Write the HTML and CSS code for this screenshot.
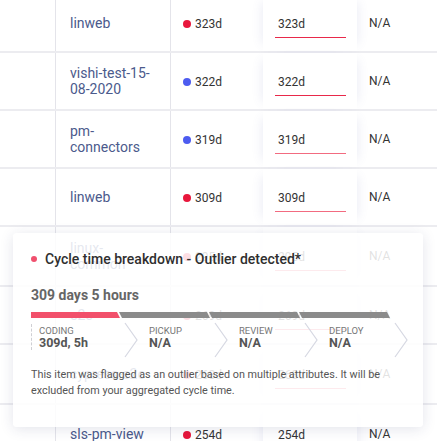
FILE: index.html
```html
<!DOCTYPE html>
<html lang="en">
	<head>
		<meta charset="UTF-8" />
		<meta name="viewport" content="width=device-width, initial-scale=1.0" />
		<title>Cycle time</title>
		<link rel="stylesheet" href="styles.css">
	</head>
	<body>
		<div class="table">
			<div class="row row-first">
				<div class="cell cell-blank"></div>
				<div class="cell cell-repo"><a href="#">linweb</a></div>
				<div class="cell cell-time"><span class="dot dot-red"></span>323d</div>
				<div class="cell cell-target"><span class="target target-strong">323d</span></div>
				<div class="cell cell-na">N/A</div>
			</div>
			<div class="row">
				<div class="cell cell-blank"></div>
				<div class="cell cell-repo"><a href="#">vishi-test-15-08-2020</a></div>
				<div class="cell cell-time"><span class="dot dot-blue"></span>322d</div>
				<div class="cell cell-target"><span class="target target-strong">322d</span></div>
				<div class="cell cell-na">N/A</div>
			</div>
			<div class="row">
				<div class="cell cell-blank"></div>
				<div class="cell cell-repo"><a href="#">pm-connectors</a></div>
				<div class="cell cell-time"><span class="dot dot-blue"></span>319d</div>
				<div class="cell cell-target"><span class="target">319d</span></div>
				<div class="cell cell-na">N/A</div>
			</div>
			<div class="row">
				<div class="cell cell-blank"></div>
				<div class="cell cell-repo"><a href="#">linweb</a></div>
				<div class="cell cell-time"><span class="dot dot-red"></span>309d</div>
				<div class="cell cell-target"><span class="target">309d</span></div>
				<div class="cell cell-na">N/A</div>
			</div>
			<div class="row row-tall">
				<div class="cell cell-blank"></div>
				<div class="cell cell-repo"><a href="#">linux-common</a></div>
				<div class="cell cell-time"><span class="dot dot-red"></span>295d</div>
				<div class="cell cell-target"><span class="target">295d</span></div>
				<div class="cell cell-na">N/A</div>
			</div>
			<div class="row">
				<div class="cell cell-blank"></div>
				<div class="cell cell-repo"><a href="#">e2e</a></div>
				<div class="cell cell-time"><span class="dot dot-red"></span>269d</div>
				<div class="cell cell-target"><span class="target">269d</span></div>
				<div class="cell cell-na">N/A</div>
			</div>
			<div class="row row-tall">
				<div class="cell cell-blank"></div>
				<div class="cell cell-repo"><a href="#">cypress-e2e</a></div>
				<div class="cell cell-time"><span class="dot dot-red"></span>268d</div>
				<div class="cell cell-target"><span class="target">268d</span></div>
				<div class="cell cell-na">N/A</div>
			</div>
			<div class="row row-tall">
				<div class="cell cell-blank"></div>
				<div class="cell cell-repo"><a href="#">sls-pm-view</a></div>
				<div class="cell cell-time"><span class="dot dot-red"></span>254d</div>
				<div class="cell cell-target"><span class="target">254d</span></div>
				<div class="cell cell-na">N/A</div>
			</div>
		</div>

		<!-- outlier popover, sits over the table -->
		<section class="popover">
			<h3 class="popover-title"><span class="title-dot"></span>Cycle time breakdown - Outlier detected*</h3>
			<div class="popover-total">309 days 5 hours</div>
			<svg class="breakdown-bar" width="360" height="6" viewBox="0 0 360 6">
				<polygon points="0,0 86,0 89,6 0,6" fill="#f2506b" />
				<polygon points="88,0 176,0 179,6 91,6" fill="#8b8b8b" />
				<polygon points="178,0 266,0 269,6 181,6" fill="#8b8b8b" />
				<polygon points="268,0 356,0 359,6 271,6" fill="#8b8b8b" />
			</svg>
			<div class="steps">
				<div class="step step-first">
					<div class="step-body">
						<div class="step-label">Coding</div>
						<div class="step-value">309d, 5h</div>
					</div>
					<svg class="chevron" width="14" height="36" viewBox="0 0 14 36"><polyline points="1,1 13,18 1,35" /></svg>
				</div>
				<div class="step">
					<div class="step-body">
						<div class="step-label">Pickup</div>
						<div class="step-value">N/A</div>
					</div>
					<svg class="chevron" width="14" height="36" viewBox="0 0 14 36"><polyline points="1,1 13,18 1,35" /></svg>
				</div>
				<div class="step">
					<div class="step-body">
						<div class="step-label">Review</div>
						<div class="step-value">N/A</div>
					</div>
					<svg class="chevron" width="14" height="36" viewBox="0 0 14 36"><polyline points="1,1 13,18 1,35" /></svg>
				</div>
				<div class="step">
					<div class="step-body">
						<div class="step-label">Deploy</div>
						<div class="step-value">N/A</div>
					</div>
					<svg class="chevron" width="14" height="36" viewBox="0 0 14 36"><polyline points="1,1 13,18 1,35" /></svg>
				</div>
			</div>
			<p class="popover-text">
				This item was flagged as an outlier based on multiple attributes. It will be
				excluded from your aggregated cycle time.
			</p>
		</section>
	</body>
</html>
```

FILE: styles.css
```css
* {
	box-sizing: border-box;
}
body {
	font-family: Roboto, "Liberation Sans", sans-serif;
	margin: 0;
	background: #fff;
	color: #333;
	overflow: hidden;
}
.table {
	width: 437px;
}
.row {
	display: grid;
	grid-template-columns: 56px 115px 92px 94px 1fr;
	height: 58px;
	border-bottom: 2px solid #ececf0;
}
.row-first {
	margin-top: -5px;
}
.row-tall {
	height: 60px;
}
.cell {
	display: flex;
	align-items: center;
	font-size: 12px;
	line-height: 16px;
}
.cell-blank {
	border-right: 1px solid #e4e4ea;
}
.cell-repo {
	border-right: 1px solid #e4e4ea;
	padding: 0 14px 0 14px;
	font-size: 14px;
}
.cell-repo a {
	color: #4b5a8c;
	text-decoration: none;
	width: 86px;
}
.cell-time {
	padding-left: 12px;
	padding-top: 1px;
}
.dot {
	width: 8px;
	height: 8px;
	border-radius: 50%;
	margin-right: 4px;
}
.dot-red {
	background: #e8173c;
}
.dot-blue {
	background: #4d5cf0;
}
.cell-target {
	position: relative;
	z-index: 1;
	background: #fff;
	padding: 0 11px 0 12px;
	box-shadow: -8px 0 10px -7px rgba(90, 100, 170, 0.12),
		8px 0 10px -7px rgba(90, 100, 170, 0.12);
}
.target {
	display: block;
	width: 71px;
	padding: 8px 3px 5px;
	border-bottom: 1px solid #f26b80;
}
.target-strong {
	border-bottom-color: #e8294a;
}
.cell-na {
	padding-left: 12px;
}

/* popover */
.popover {
	position: absolute;
	top: 233px;
	left: 13px;
	width: 410px;
	height: 194px;
	z-index: 5;
	padding: 16px 18px 0;
	background: rgba(255, 255, 255, 0.86);
	border-radius: 4px;
	box-shadow: 0 2px 14px rgba(40, 50, 100, 0.13);
}
.popover-title {
	display: flex;
	align-items: center;
	margin: 0;
	font-size: 14px;
	line-height: 20px;
	font-weight: 500;
	color: #2f2f2f;
}
.title-dot {
	width: 6px;
	height: 6px;
	border-radius: 50%;
	background: #f0506e;
	margin-right: 8px;
}
.popover-total {
	margin-top: 16px;
	font-size: 14px;
	line-height: 20px;
	font-weight: 700;
	color: #666;
}
.breakdown-bar {
	display: block;
	margin-top: 7px;
}
.steps {
	display: grid;
	grid-template-columns: repeat(4, 90px);
	padding-top: 8px;
}
.step {
	position: relative;
	padding-left: 28px;
}
.step-first {
	padding-left: 0;
}
.step-first .step-body {
	border-left: 1px dashed #cfcfd4;
	padding-left: 7px;
	margin-top: -2px;
	padding-top: 2px;
}
.step-label {
	font-size: 9.5px;
	line-height: 10px;
	text-transform: uppercase;
	color: #777;
}
.step-value {
	font-size: 12.5px;
	line-height: 14px;
	font-weight: 700;
	color: #555;
}
.chevron {
	position: absolute;
	top: -4px;
	left: 93px;
}
.chevron polyline {
	fill: none;
	stroke: #d6d8e2;
	stroke-width: 1.2;
}
.popover-text {
	margin: 17px 0 0;
	max-width: 352px;
	font-size: 10.8px;
	line-height: 16px;
	color: #555;
}
```
